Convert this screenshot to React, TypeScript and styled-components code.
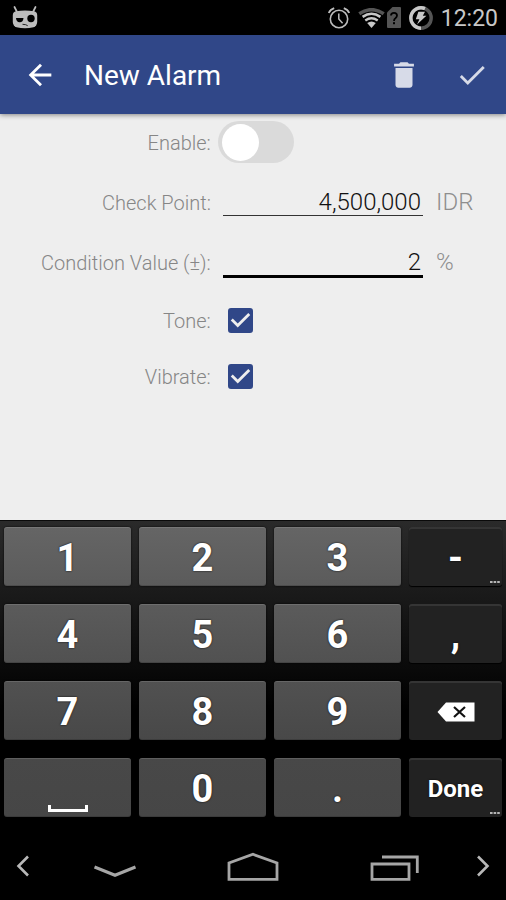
import React, { useState } from "react";
import styled, { createGlobalStyle, css } from "styled-components";

const GlobalStyle = createGlobalStyle`
  *, *::before, *::after { box-sizing: border-box; }
  body { margin: 0; background: #000; font-family: Roboto, "Liberation Sans", sans-serif; }
  button, input { font: inherit; margin: 0; }
  svg { display: block; flex: none; }
`;

const Screen = styled.div`
  display: flex;
  flex-direction: column;
  min-height: 100vh;
  background: #000;
`;

const StatusBar = styled.div`
  display: flex;
  align-items: center;
  justify-content: space-between;
  height: 35px;
  padding: 0 8px 0 12px;
  color: #c8c8c8;
`;

const StatusIcons = styled.div`
  display: flex;
  align-items: center;
  gap: 8px;
`;

const SignalIcons = styled.div`
  display: flex;
  align-items: center;
  gap: 2px;
`;

const Clock = styled.span`
  padding-top: 2px;
  font-size: 23px;
  line-height: 32px;
`;

const AppBar = styled.header`
  display: flex;
  align-items: center;
  height: 79px;
  background: #304788;
  color: #fff;
  box-shadow: 0 1px 5px rgba(0, 0, 0, 0.45);
  z-index: 1;
`;

const BarButton = styled.button<{ $width: number; $dim?: boolean }>`
  display: flex;
  align-items: center;
  justify-content: center;
  width: ${(p) => p.$width}px;
  height: 100%;
  padding: 0;
  border: 0;
  background: none;
  color: ${(p) => (p.$dim ? "#d7dbe8" : "#fff")};
`;

const Title = styled.h1`
  flex: 1;
  margin: 0;
  padding: 2px 0 0 5px;
  font-size: 28px;
  font-weight: 400;
  line-height: 36px;
`;

const Form = styled.form`
  flex: 1;
  background: #eeeeee;
`;

const Row = styled.div<{ $height: number; $spaced?: boolean }>`
  display: grid;
  grid-template-columns: minmax(0, 5fr) minmax(0, 7fr);
  align-items: center;
  height: ${(p) => p.$height}px;
  margin-bottom: ${(p) => (p.$spaced ? 2 : 0)}px;
`;

const Label = styled.label`
  padding-top: 1px;
  color: #868686;
  font-size: 20px;
  font-weight: 300;
  line-height: 24px;
  text-align: right;
`;

const FieldCell = styled.div`
  display: flex;
  align-items: center;
  padding-left: 12px;
`;

const TextField = styled.input<{ $active?: boolean }>`
  flex: 1;
  min-width: 0;
  height: ${(p) => (p.$active ? 32 : 28)}px;
  padding: ${(p) => (p.$active ? 2 : 0)}px 2px 0;
  border: 0;
  border-bottom: ${(p) => (p.$active ? "3px solid #000" : "1px solid #333")};
  border-radius: 0;
  outline: 0;
  background: none;
  color: #111;
  font-size: 24px;
  font-weight: 300;
  text-align: right;
`;

const Unit = styled.span`
  flex: none;
  width: 83px;
  padding-left: 13px;
  color: #8e8e8e;
  font-size: 24px;
  font-weight: 300;
  line-height: 28px;
`;

const SwitchCell = styled.div`
  display: flex;
  padding-left: 7px;
`;

const Switch = styled.input`
  appearance: none;
  display: flex;
  align-items: center;
  width: 76px;
  height: 42px;
  padding: 0 4px;
  border-radius: 21px;
  background: #dadada;

  &::before {
    content: "";
    width: 37px;
    height: 37px;
    border-radius: 50%;
    background: #fff;
  }

  &:checked {
    justify-content: flex-end;
    background: #304788;
  }
`;

const CheckCell = styled.div`
  display: grid;
  justify-content: start;
  padding-left: 17px;

  > * {
    grid-area: 1 / 1;
  }

  svg {
    pointer-events: none;
  }
`;

const CheckBox = styled.input`
  appearance: none;
  width: 25px;
  height: 25px;
  border: 2px solid #304788;
  border-radius: 3px;

  &:checked {
    background: #304788;
  }

  &:not(:checked) + svg {
    visibility: hidden;
  }
`;

const Keyboard = styled.div`
  display: grid;
  grid-template-columns: 127fr 127fr 127fr 93fr;
  gap: 18px 8px;
  padding: 6px 4px 15px;
  border-top: 1px solid #0a0a0a;
  background: linear-gradient(#2a2a2a, #000 190px);
`;

const keyShades = [
  ["#656565", "#5b5b5b"],
  ["#5b5b5b", "#515151"],
  ["#515151", "#484848"],
  ["#484848", "#464646"],
];

const Key = styled.button<{ $row: number; $dark?: boolean; $small?: boolean }>`
  position: relative;
  display: flex;
  align-items: center;
  justify-content: center;
  height: 59px;
  padding: 2px 0 0;
  border: 0;
  border-radius: 3px;
  color: #fff;
  font-size: ${(p) => (p.$small ? 24 : 38)}px;
  font-weight: 700;
  line-height: 44px;
  text-shadow: 0 0 2px #000;
  ${(p) =>
    p.$dark
      ? css`
          background: #222;
          box-shadow: inset 0 2px 0 #353535, 0 1px 1px #000;
        `
      : css`
          background: linear-gradient(${keyShades[p.$row][0]}, ${keyShades[p.$row][1]});
          box-shadow: inset 0 1px 0 rgba(255, 255, 255, 0.12),
            inset 0 -1px 0 rgba(0, 0, 0, 0.15), 0 0 2px #000;
        `}
`;

const HintDots = styled.svg`
  position: absolute;
  right: 2px;
  bottom: 2px;
`;

const SpaceMark = styled.svg`
  align-self: flex-end;
  margin-bottom: 4px;
`;

const NavBar = styled.nav`
  display: grid;
  grid-template-columns: 46px 1fr 1fr 1fr 46px;
  height: 68px;
`;

const NavButton = styled.button`
  display: flex;
  align-items: center;
  justify-content: center;
  padding: 0;
  border: 0;
  background: none;
  color: #a6a6a6;
`;

const RobotIcon = () => (
  <svg width="26" height="24" viewBox="0 0 26 24">
    <path d="M2.5 1l2.500 5M23.500 1l-2.500 5" stroke="#bdbdbd" strokeWidth="1.7" strokeLinecap="round" />
    <path d="M4 5.200Q13 3.600 22 5.200Q25 5.800 25.200 9L25.200 16Q25 20 21.500 21.300Q13 23 4.500 21.300Q1 20 .8 16L.8 9Q1 5.800 4 5.200Z" fill="#bdbdbd" />
    <path d="M4 12H11.500Q11 16.500 7.600 16.300Q4.200 16 4 12Z" fill="#000" />
    <circle cx="19" cy="12.5" r="3.7" fill="#000" />
    <path d="M10.500 18.300l3.200.4 2 1" fill="none" stroke="#222" strokeWidth="1" />
  </svg>
);

const AlarmIcon = () => (
  <svg width="22" height="22" viewBox="0 0 22 22" fill="none" stroke="#bdbdbd">
    <circle cx="11" cy="12" r="8.7" strokeWidth="1.6" />
    <path d="M10.8 6.5V12l3.8 4.2" strokeWidth="1.5" />
    <path d="M.8 6Q2.2 2.6 6.2 1.2M21.2 6Q19.8 2.6 15.8 1.2" strokeWidth="1.8" />
  </svg>
);

const WifiIcon = () => (
  <svg width="27" height="20" viewBox="0 0 27 20" fill="none">
    <path d="M1.3 5.8Q13.5-2.4 25.7 5.8" stroke="#555" strokeWidth="3.6" />
    <path d="M4.6 8.8Q13.5 2.800 22.4 8.8" stroke="#c8c8c8" strokeWidth="2.6" />
    <path d="M7.3 12.4Q13.5 8 19.7 12.4" stroke="#c8c8c8" strokeWidth="2.4" />
    <path d="M9.2 15Q13.5 12 17.8 15L13.5 20Z" fill="#c8c8c8" />
  </svg>
);

const SimIcon = () => (
  <svg width="14" height="21" viewBox="0 0 14 21">
    <path d="M5.5 0H13Q14 0 14 1V20Q14 21 13 21H1Q0 21 0 20V5.5Z" fill="#555" />
    <path d="M4 8.6Q4 5.8 7 5.8T10 8.6Q10 10.1 8.4 11.3Q7 12.3 7 14" fill="none" stroke="#000" strokeWidth="1.8" />
    <rect x="6" y="15.2" width="2" height="2" />
  </svg>
);

const BatteryIcon = () => (
  <svg width="24" height="24" viewBox="0 0 24 24" fill="none">
    <circle cx="12" cy="12" r="10.2" stroke="#555" strokeWidth="3.4" />
    <path d="M12 22.200A10.200 10.200 0 1 1 16 2.600" stroke="#c8c8c8" strokeWidth="3.4" />
    <path d="M9.4 5.8H16L13.8 9.8H17.4L8 18.6L10.4 13.2H6.8Z" fill="#c8c8c8" />
  </svg>
);

const BackIcon = () => (
  <svg width="34" height="34" viewBox="0 0 24 24" fill="currentColor">
    <path d="M20 11H7.83l5.59-5.59L12 4l-8 8 8 8 1.41-1.41L7.83 13H20v-2z" />
  </svg>
);

const TrashIcon = () => (
  <svg width="34" height="34" viewBox="0 0 24 24" fill="currentColor">
    <path d="M6 19c0 1.1.9 2 2 2h8c1.1 0 2-.9 2-2V7H6v12zM19 4h-3.5l-1-1h-5l-1 1H5v2h14V4z" />
  </svg>
);

const DoneIcon = () => (
  <svg width="34" height="34" viewBox="0 0 24 24" fill="currentColor">
    <path d="M9 16.17L4.83 12l-1.42 1.41L9 19 21 7l-1.41-1.41z" />
  </svg>
);

const TickIcon = () => (
  <svg width="25" height="25" viewBox="3 3 18 18" fill="#eee">
    <path d="M10 17l-5-5 1.41-1.41L10 14.17l7.59-7.59L19 8l-9 9z" />
  </svg>
);

const MoreHint = () => (
  <HintDots width="10" height="3" viewBox="0 0 10 3" fill="#b5b5b5">
    <path d="M0 0h2.6v2H0zM3.6 0h2.6v2H3.6zM7.2 0h2.6v2H7.2z" />
  </HintDots>
);

const BackspaceIcon = () => (
  <svg width="38" height="20" viewBox="0 0 38 20">
    <path d="M9 .5H37.5V19.5H9L.5 10Z" fill="#fff" />
    <path d="M17 5l11 10M28 5l-11 10" stroke="#111" strokeWidth="2.2" />
  </svg>
);

const ChevronIcon = ({ flip = false }: { flip?: boolean }) => (
  <svg width="14" height="22" viewBox="0 0 14 22" fill="none">
    <path d={flip ? "M2 1.5L11.5 11L2 20.5" : "M12 1.5L2.5 11L12 20.5"} stroke="#b8b8b8" strokeWidth="2.6" />
  </svg>
);

const HideIcon = () => (
  <svg width="42" height="22" viewBox="0 0 42 22" fill="none" stroke="currentColor">
    <path d="M.5 12L21 20.2L41.5 12" strokeWidth="3.2" />
  </svg>
);

const HomeIcon = () => (
  <svg width="52" height="30" viewBox="0 0 52 30" fill="none" stroke="currentColor">
    <path d="M2 28.3V12L26 3.3L50 12V28.3Z" strokeWidth="2.8" />
  </svg>
);

const RecentsIcon = () => (
  <svg width="56" height="30" viewBox="0 0 56 30" fill="none" stroke="currentColor" strokeWidth="2.8">
    <path d="M9 13H46V28.3H9Z" />
    <path d="M19 6H54.3V22" />
  </svg>
);

export default function App() {
  const [checkPoint, setCheckPoint] = useState("4,500,000");
  const [condition, setCondition] = useState("2");

  return (
    <Screen>
      <GlobalStyle />
      <StatusBar>
        <RobotIcon />
        <StatusIcons>
          <AlarmIcon />
          <SignalIcons>
            <WifiIcon />
            <SimIcon />
          </SignalIcons>
          <BatteryIcon />
          <Clock>12:20</Clock>
        </StatusIcons>
      </StatusBar>

      <AppBar>
        <BarButton $width={79} aria-label="Back"><BackIcon /></BarButton>
        <Title>New Alarm</Title>
        <BarButton $width={68} $dim aria-label="Delete"><TrashIcon /></BarButton>
        <BarButton $width={68} $dim aria-label="Save"><DoneIcon /></BarButton>
      </AppBar>

      <Form>
        <Row $height={56} $spaced>
          <Label htmlFor="enable">Enable:</Label>
          <SwitchCell>
            <Switch id="enable" type="checkbox" role="switch" />
          </SwitchCell>
        </Row>
        <Row $height={60}>
          <Label htmlFor="check-point">Check Point:</Label>
          <FieldCell>
            <TextField id="check-point" value={checkPoint} onChange={(e) => setCheckPoint(e.target.value)} />
            <Unit>IDR</Unit>
          </FieldCell>
        </Row>
        <Row $height={60}>
          <Label htmlFor="condition">Condition Value (±):</Label>
          <FieldCell>
            <TextField id="condition" $active value={condition} onChange={(e) => setCondition(e.target.value)} />
            <Unit>%</Unit>
          </FieldCell>
        </Row>
        <Row $height={56}>
          <Label htmlFor="tone">Tone:</Label>
          <CheckCell>
            <CheckBox id="tone" type="checkbox" defaultChecked />
            <TickIcon />
          </CheckCell>
        </Row>
        <Row $height={56}>
          <Label htmlFor="vibrate">Vibrate:</Label>
          <CheckCell>
            <CheckBox id="vibrate" type="checkbox" defaultChecked />
            <TickIcon />
          </CheckCell>
        </Row>
      </Form>

      <Keyboard>
        <Key $row={0}>1</Key>
        <Key $row={0}>2</Key>
        <Key $row={0}>3</Key>
        <Key $row={0} $dark>-<MoreHint /></Key>
        <Key $row={1}>4</Key>
        <Key $row={1}>5</Key>
        <Key $row={1}>6</Key>
        <Key $row={1} $dark>,</Key>
        <Key $row={2}>7</Key>
        <Key $row={2}>8</Key>
        <Key $row={2}>9</Key>
        <Key $row={2} $dark aria-label="Backspace"><BackspaceIcon /></Key>
        <Key $row={3} aria-label="Space">
          <SpaceMark width="42" height="9" viewBox="0 0 42 9" fill="none" stroke="#fff" strokeWidth="3">
            <path d="M2.5 1V6.5H39.5V1" />
          </SpaceMark>
        </Key>
        <Key $row={3}>0</Key>
        <Key $row={3}>.</Key>
        <Key $row={3} $dark $small>Done<MoreHint /></Key>
      </Keyboard>

      <NavBar>
        <NavButton aria-label="Cursor left"><ChevronIcon /></NavButton>
        <NavButton aria-label="Hide keyboard"><HideIcon /></NavButton>
        <NavButton aria-label="Home"><HomeIcon /></NavButton>
        <NavButton aria-label="Recent apps"><RecentsIcon /></NavButton>
        <NavButton aria-label="Cursor right"><ChevronIcon flip /></NavButton>
      </NavBar>
    </Screen>
  );
}
